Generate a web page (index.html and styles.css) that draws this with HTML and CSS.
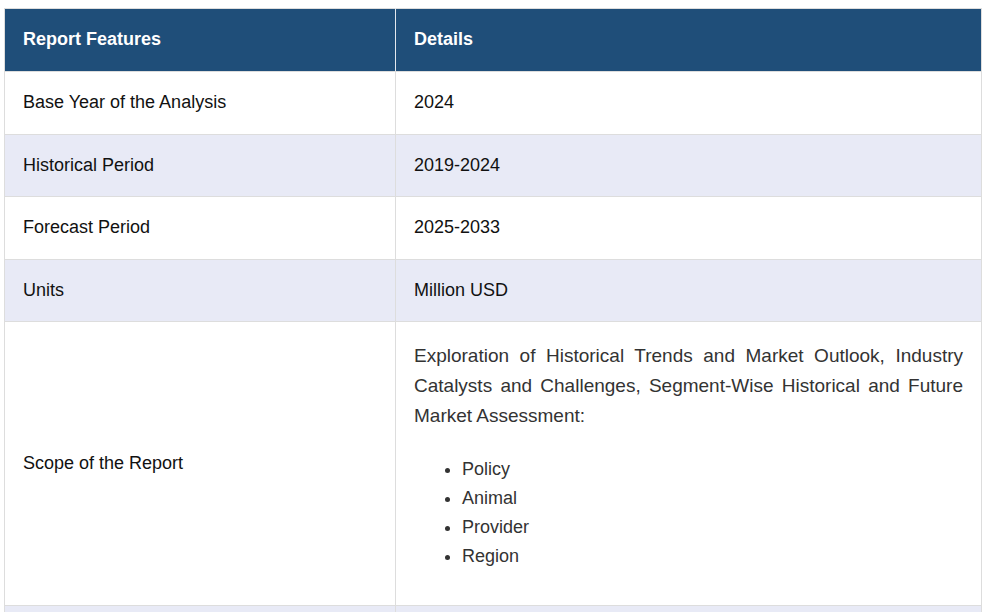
FILE: index.html
```html
<!DOCTYPE html>
<html lang="en">
<head>
<meta charset="utf-8">
<title>Report Features</title>
<link rel="stylesheet" href="styles.css">
</head>
<body>
<div class="wrap">
<table class="report">
  <thead>
    <tr><th class="c1">Report Features</th><th>Details</th></tr>
  </thead>
  <tbody>
    <tr><td>Base Year of the Analysis</td><td>2024</td></tr>
    <tr class="alt"><td>Historical Period</td><td>2019-2024</td></tr>
    <tr><td>Forecast Period</td><td>2025-2033</td></tr>
    <tr class="alt"><td>Units</td><td>Million USD</td></tr>
    <tr>
      <td>Scope of the Report</td>
      <td class="scope">
        <p>Exploration of Historical Trends and Market Outlook, Industry Catalysts and Challenges, Segment-Wise Historical and Future Market Assessment:</p>
        <ul>
          <li>Policy</li>
          <li>Animal</li>
          <li>Provider</li>
          <li>Region</li>
        </ul>
      </td>
    </tr>
    <tr class="alt"><td>&nbsp;</td><td>&nbsp;</td></tr>
  </tbody>
</table>
</div>
</body>
</html>
```
FILE: styles.css
```css
html, body {
  margin: 0;
  padding: 0;
  background: #ffffff;
}
body {
  font-family: "Liberation Sans", Arial, sans-serif;
}
.wrap {
  padding: 8px 9px 0 4px;
}
.report {
  width: 978px;
  border-collapse: collapse;
  table-layout: fixed;
  border: 1px solid #dddddd;
}
.report th,
.report td {
  text-align: left;
  vertical-align: middle;
  padding: 20px 18px;
  font-size: 18px;
  line-height: 21.6px;
  border: 1px solid #dddddd;
}
.report th {
  background: #1f4e79;
  color: #ffffff;
  font-weight: bold;
  padding-top: 19px;
  padding-bottom: 21px;
  line-height: 22px;
  border-top-color: #dddddd;
  border-bottom-color: #dddddd;
  border-left-color: #e4e8ee;
  border-right-color: #dddddd;
}
.report th.c1 {
  width: 391px;
  box-sizing: border-box;
  border-left-color: #dddddd;
  border-right-color: #e4e8ee;
}
.report td {
  color: #111111;
}
.report tr.alt td {
  background: #e8eaf6;
}
.report td.scope {
  color: #333333;
  padding-top: 19px;
}
.scope p {
  margin: 0;
  font-size: 19px;
  line-height: 30px;
  text-align: justify;
}
.scope ul {
  margin: 24px 0 14px 0;
  padding-left: 48px;
}
.scope li {
  font-size: 18px;
  line-height: 28.8px;
}
```
